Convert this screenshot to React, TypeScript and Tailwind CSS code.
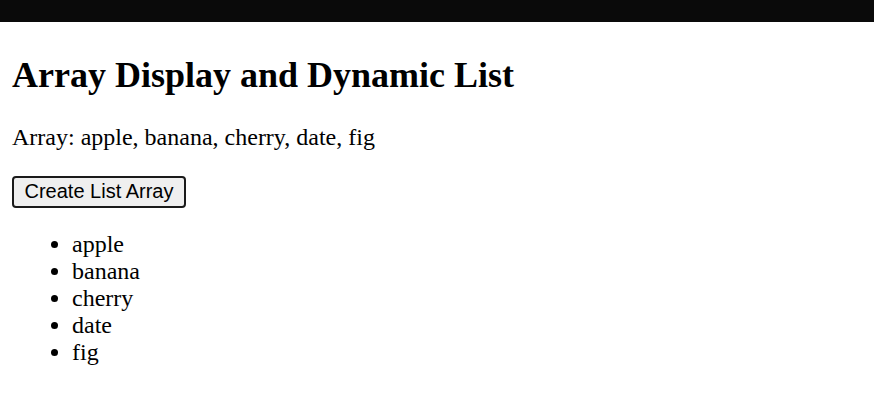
const fruits = ["apple", "banana", "cherry", "date", "fig"];

export default function App() {
  return (
    <div className="min-h-screen bg-white text-black" style={{ fontFamily: '"Liberation Serif", "Times New Roman", serif' }}>
      <div className="h-[22px] w-full bg-[#0a0a0a]" />
      <div className="px-[12px]">
        <h1 className="mt-[33px] text-[36px] font-bold leading-[41px]">Array Display and Dynamic List</h1>
        <p className="mt-[28px] text-[24px] leading-[27.5px]">Array: {fruits.join(", ")}</p>
        <button
          type="button"
          className="mt-[24px] flex h-[32px] items-center rounded-[4px] border-2 border-[#1a1a1a] bg-[#efefef] px-[10.5px] text-[20px] leading-[23px] text-black"
          style={{ fontFamily: '"Liberation Sans", Arial, sans-serif' }}
        >
          Create List Array
        </button>
        <ul className="mt-[23px] list-disc pl-[60px] text-[24px] leading-[27px]">
          {fruits.map((f) => (
            <li key={f}>{f}</li>
          ))}
        </ul>
      </div>
    </div>
  );
}
